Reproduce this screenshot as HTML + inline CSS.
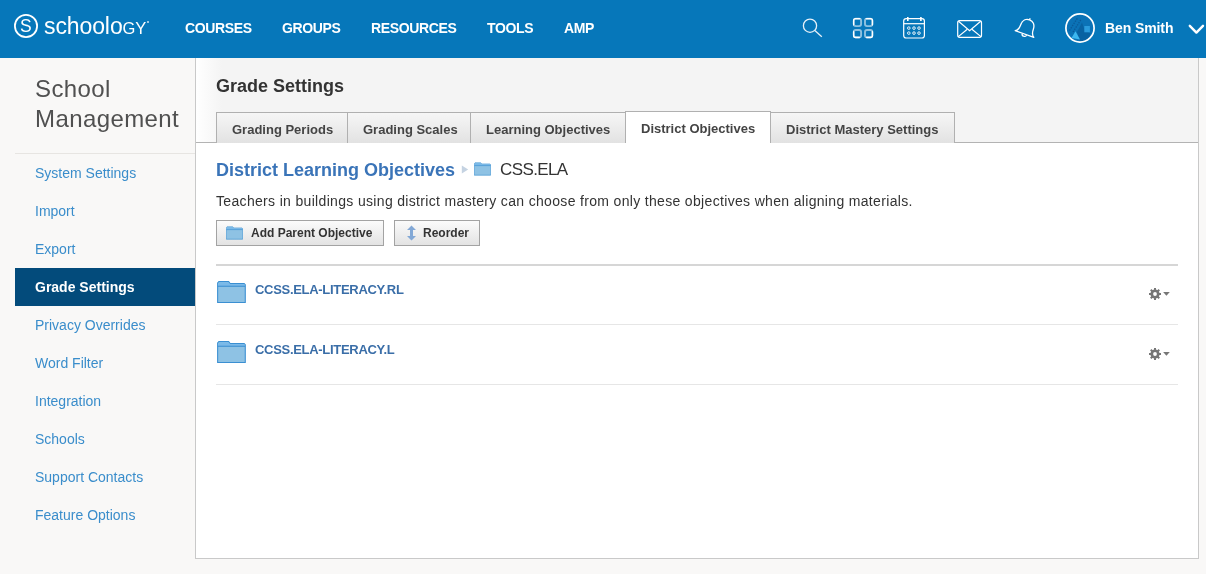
<!DOCTYPE html>
<html><head><meta charset="utf-8">
<style>
*{margin:0;padding:0;box-sizing:border-box}
html,body{width:1206px;height:574px;overflow:hidden;background:#f9f8f7;font-family:"Liberation Sans",sans-serif}
.a{position:absolute;line-height:1;white-space:nowrap}
.d{position:absolute}
#hdr{position:absolute;left:0;top:0;width:1206px;height:58px;background:#0677ba}
.nav{color:#fff;font-weight:bold;font-size:14px;top:21px;letter-spacing:-0.35px}
.it{position:absolute;left:35px;font-size:14px;color:#3a8dcb;line-height:1;white-space:nowrap}
.tab{position:absolute;top:112px;height:31px;border:1px solid #b0b0b0;border-bottom:none;background:linear-gradient(#f6f6f6,#e2e2e2);color:#444;font-weight:bold;font-size:13px}
.tab span{position:absolute;top:12px;line-height:1;white-space:nowrap}
.tab.act{top:111px;height:32px;background:#fff;border-color:#b0b0b0}
.btn{position:absolute;top:220px;height:26px;border:1px solid #a3a3a3;background:linear-gradient(#fbfbfb,#e3e3e3);color:#333;font-weight:bold;font-size:12px}
.row-t{color:#3a6ea8;font-weight:bold;font-size:13px;letter-spacing:-0.3px}
body>*{will-change:transform}
</style></head><body>
<svg width="0" height="0" style="position:absolute">
  <defs>
    <symbol id="fold" viewBox="0 0 30 23">
      <path d="M0.5,22.5 L0.5,2 L1.8,0.6 L12,0.6 L13.6,2.6 L28.2,2.6 L29.4,3.8 L29.4,22.5 Z" fill="#8ec2e4" stroke="#3a8fd2" stroke-width="1.1"/>
      <path d="M1.1,5.2 L1.1,2.3 L2.2,1.2 L11.7,1.2 L13.3,3.2 L28,3.2 L28.8,4.2 L28.8,5.2 Z" fill="#7ab9e8"/>
      <path d="M0.6,5.5 L29.3,5.5" stroke="#3a8fd2" stroke-width="1.1"/>
    </symbol>
    <symbol id="gear" viewBox="0 0 24 14">
      <g fill="#777">
        <path d="M6,0 L7,0 L7,2 L6,2 Z"/>
      </g>
    </symbol>
  </defs>
</svg>

<div id="hdr">
  <svg class="d" style="left:0;top:0" width="1206" height="58" viewBox="0 0 1206 58">
    <circle cx="26" cy="26" r="11.1" fill="none" stroke="#fff" stroke-width="1.8"/>
    <!-- search -->
    <g fill="none" stroke="#e6f0f8" stroke-width="1.3">
      <circle cx="810" cy="25.7" r="6.6"/>
      <path d="M814.8,30.5 L821.8,36.8"/>
    </g>
    <!-- grid -->
    <defs>
      <clipPath id="c1"><polygon points="851,28 851,16 863,16"/></clipPath>
      <clipPath id="c2"><polygon points="863,16 875,16 875,28"/></clipPath>
      <clipPath id="c3"><polygon points="851,28.5 851,40.5 863,40.5"/></clipPath>
      <clipPath id="c4"><polygon points="875,28.5 875,40.5 863,40.5"/></clipPath>
    </defs>
    <g fill="none" stroke="rgba(255,255,255,0.55)" stroke-width="1.9">
      <rect x="853.8" y="18.8" width="7.3" height="7.3" rx="2"/>
      <rect x="865" y="18.8" width="7.3" height="7.3" rx="2"/>
      <rect x="853.8" y="30" width="7.3" height="7.3" rx="2"/>
      <rect x="865" y="30" width="7.3" height="7.3" rx="2"/>
    </g>
    <g fill="none" stroke="#fff" stroke-width="1.3">
      <rect x="853.6" y="18.6" width="7.6" height="7.6" rx="2" clip-path="url(#c1)"/>
      <rect x="864.9" y="18.6" width="7.6" height="7.6" rx="2" clip-path="url(#c2)"/>
      <rect x="853.6" y="29.9" width="7.6" height="7.6" rx="2" clip-path="url(#c3)"/>
      <rect x="864.9" y="29.9" width="7.6" height="7.6" rx="2" clip-path="url(#c4)"/>
    </g>
    <!-- calendar -->
    <g fill="none" stroke="#fff" stroke-width="1.2">
      <rect x="903.7" y="18.6" width="20.7" height="19.4" rx="2.5"/>
      <path d="M903.7,23.7 L924.4,23.7"/>
      <path d="M907.8,17 L907.8,21 M920.9,17 L920.9,21" stroke-width="1.6"/>
      <g stroke-width="0.9">
        <circle cx="908.8" cy="28.1" r="1.3"/><circle cx="914" cy="28.1" r="1.3"/><circle cx="919" cy="28.1" r="1.3"/>
        <circle cx="908.8" cy="33.1" r="1.3"/><circle cx="914" cy="33.1" r="1.3"/><circle cx="919" cy="33.1" r="1.3"/>
      </g>
    </g>
    <!-- mail -->
    <g fill="none" stroke="#fff" stroke-width="1.2">
      <rect x="957.7" y="20.7" width="23.8" height="16.6" rx="2"/>
      <path d="M958.5,21.2 L969.6,30.8 L980.7,21.2"/>
      <path d="M958.3,36.6 L967.3,29.3 M980.9,36.6 L971.9,29.3"/>
    </g>
    <!-- bell -->
    <g transform="translate(1024.5,34) rotate(19.7)" fill="none" stroke="#fff" stroke-width="1.3" stroke-linejoin="round">
      <path d="M-9.9,0 C-7.2,-1.6 -6.7,-3.5 -6.7,-7.5 C-6.7,-12.2 -3.8,-15 0,-15 C3.8,-15 6.7,-12.2 6.7,-7.5 C6.7,-3.5 7.2,-1.6 9.9,0 Z"/>
      <path d="M0,-15 L0,-16.8"/>
      <path d="M-2.3,0.4 A2.3,2 0 0 0 2.3,0.4"/>
    </g>
    <!-- avatar -->
    <circle cx="1080" cy="28" r="14.1" fill="#0b72b6"/>
    <path d="M1077,32 L1082,22.5 L1084.8,30.5 L1090.5,33.3 L1089,38.5 L1080,42 Z" fill="#0862a2"/>
    <rect x="1084.3" y="26" width="5.6" height="6.3" fill="#2a9bdc"/>
    <path d="M1069.5,30.5 L1077.5,18 M1073,32 L1081,19.5" stroke="#0a5a98" stroke-width="1.3" stroke-dasharray="1.4 1.2" fill="none"/>
    <path d="M1071.5,38 L1075.5,31.3 L1080,39.5 Z" fill="#3cb7f0"/>
    <circle cx="1080" cy="28" r="14.1" fill="none" stroke="#fff" stroke-width="1.7"/>
    <!-- chevron -->
    <path d="M1189.8,25.8 L1196.4,32.6 L1203,25.8" fill="none" stroke="#fff" stroke-width="2.4" stroke-linecap="round" stroke-linejoin="round"/>
  </svg>
  <span class="a" style="left:20px;top:18px;color:#fff;font-size:17.5px">S</span>
  <span class="a" style="left:44px;top:15px;color:#fff;font-size:23px;letter-spacing:-0.1px">schoolo<span style="font-size:16.5px">GY</span></span>
  <div class="d" style="left:147px;top:21px;width:2px;height:2px;background:#cfe3f2;border-radius:1px"></div>
  <span class="a nav" style="left:185px">COURSES</span>
  <span class="a nav" style="left:282px">GROUPS</span>
  <span class="a nav" style="left:371px">RESOURCES</span>
  <span class="a nav" style="left:487px">TOOLS</span>
  <span class="a nav" style="left:564px">AMP</span>
  <span class="a nav" style="left:1105px;letter-spacing:-0.1px">Ben Smith</span>
</div>

<!-- sidebar -->
<span class="a" style="left:35px;top:74px;font-size:24px;color:#505050;line-height:30px;letter-spacing:0.4px;white-space:normal;width:160px">School<br>Management</span>
<div class="d" style="left:15px;top:153px;width:180px;height:1px;background:#e7e5e2"></div>
<span class="it" style="top:166px">System Settings</span>
<span class="it" style="top:204px">Import</span>
<span class="it" style="top:242px">Export</span>
<div class="d" style="left:15px;top:268px;width:180px;height:38px;background:#034b7b"></div>
<span class="it" style="top:280px;color:#fff;font-weight:bold">Grade Settings</span>
<span class="it" style="top:318px">Privacy Overrides</span>
<span class="it" style="top:356px">Word Filter</span>
<span class="it" style="top:394px">Integration</span>
<span class="it" style="top:432px">Schools</span>
<span class="it" style="top:470px">Support Contacts</span>
<span class="it" style="top:508px">Feature Options</span>

<!-- main panel -->
<div class="d" style="left:195px;top:58px;width:1004px;height:501px;background:#fff;border:1px solid #c9c9c9;border-top:none"></div>
<div class="d" style="left:196px;top:58px;width:1002px;height:85px;background:linear-gradient(to right,#fff 0,#f4f4f4 26px);border-bottom:1px solid #b3b3b3"></div>
<span class="a" style="left:216px;top:77px;font-size:18px;font-weight:bold;color:#333">Grade Settings</span>
<div class="tab" style="left:216px;width:132px"><span style="left:15px;top:10px">Grading Periods</span></div>
<div class="tab" style="left:347px;width:124px"><span style="left:15px;top:10px">Grading Scales</span></div>
<div class="tab" style="left:470px;width:156px"><span style="left:15px;top:10px">Learning Objectives</span></div>
<div class="tab act" style="left:625px;width:146px"><span style="left:15px;top:10px">District Objectives</span></div>
<div class="tab" style="left:770px;width:185px"><span style="left:15px;top:10px">District Mastery Settings</span></div>

<span class="a" style="left:216px;top:161px;font-size:18px;font-weight:bold;color:#3a74b8">District Learning Objectives</span>
<svg class="d" style="left:461px;top:165px" width="8" height="9" viewBox="0 0 8 9"><path d="M0.8,0.5 L7.2,4.5 L0.8,8.5 Z" fill="#c5d3e2"/></svg>
<svg class="d" style="left:474px;top:162px" width="17" height="14"><use href="#fold" width="17" height="14"/></svg>
<span class="a" style="left:500px;top:161px;font-size:17px;color:#333;letter-spacing:-0.6px">CSS.ELA</span>
<span class="a" style="left:216px;top:194px;font-size:14px;color:#333;letter-spacing:0.33px">Teachers in buildings using district mastery can choose from only these objectives when aligning materials.</span>

<div class="btn" style="left:216px;width:168px"><span class="a" style="left:34px;top:6px">Add Parent Objective</span></div>
<svg class="d" style="left:226px;top:226px" width="17" height="14"><use href="#fold" width="17" height="14"/></svg>
<div class="btn" style="left:394px;width:86px"><span class="a" style="left:28px;top:6px">Reorder</span></div>
<svg class="d" style="left:406px;top:225px" width="11" height="16" viewBox="0 0 11 16">
  <path d="M5.5,0.5 L10,5 L7,5 L7,11 L10,11 L5.5,15.5 L1,11 L4,11 L4,5 L1,5 Z" fill="#82a8d6"/>
</svg>

<div class="d" style="left:216px;top:264px;width:962px;height:2px;background:#d6d6d6"></div>
<svg class="d" style="left:217px;top:281px" width="29" height="22"><use href="#fold" width="29" height="22"/></svg>
<span class="a row-t" style="left:255px;top:283px">CCSS.ELA-LITERACY.RL</span>
<svg class="d" style="left:1146px;top:286px" width="26" height="16" viewBox="0 0 26 16">
  <g transform="translate(9,8)" fill="#777">
    <circle r="4.6"/>
    <rect x="-1" y="-6" width="2" height="12"/>
    <rect x="-6" y="-1" width="12" height="2"/>
    <rect x="-1" y="-6" width="2" height="12" transform="rotate(45)"/>
    <rect x="-1" y="-6" width="2" height="12" transform="rotate(-45)"/>
    <circle r="1.9" fill="#fff"/>
  </g>
  <path d="M17.1,6 L23.8,6 L20.45,9.8 Z" fill="#777"/>
</svg>
<div class="d" style="left:216px;top:324px;width:962px;height:1px;background:#e6e6e6"></div>
<svg class="d" style="left:217px;top:341px" width="29" height="22"><use href="#fold" width="29" height="22"/></svg>
<span class="a row-t" style="left:255px;top:343px">CCSS.ELA-LITERACY.L</span>
<svg class="d" style="left:1146px;top:346px" width="26" height="16" viewBox="0 0 26 16">
  <g transform="translate(9,8)" fill="#777">
    <circle r="4.6"/>
    <rect x="-1" y="-6" width="2" height="12"/>
    <rect x="-6" y="-1" width="12" height="2"/>
    <rect x="-1" y="-6" width="2" height="12" transform="rotate(45)"/>
    <rect x="-1" y="-6" width="2" height="12" transform="rotate(-45)"/>
    <circle r="1.9" fill="#fff"/>
  </g>
  <path d="M17.1,6 L23.8,6 L20.45,9.8 Z" fill="#777"/>
</svg>
<div class="d" style="left:216px;top:384px;width:962px;height:1px;background:#e6e6e6"></div>
</body></html>
